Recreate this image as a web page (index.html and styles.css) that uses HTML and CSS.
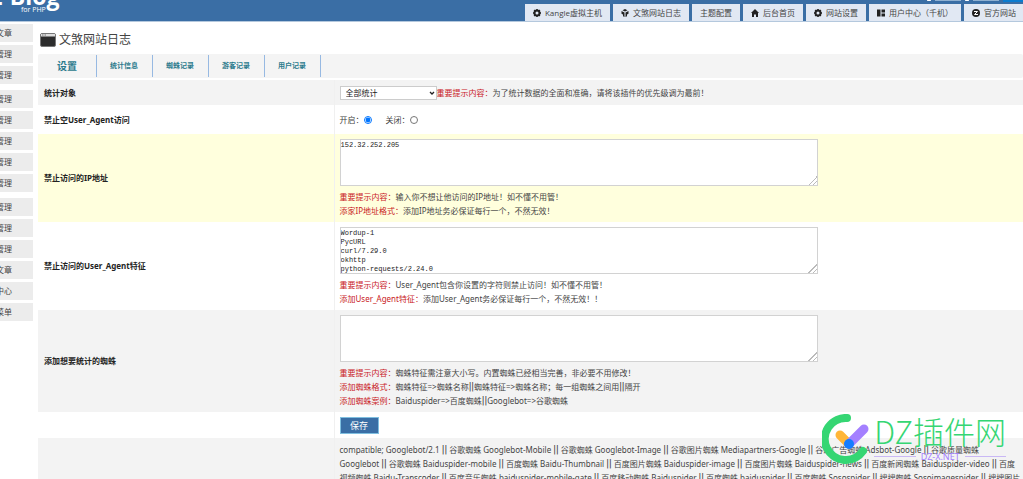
FILE: index.html
```html
<!DOCTYPE html>
<html lang="zh-CN">
<head>
<meta charset="utf-8">
<title>文煞网站日志</title>
<link rel="stylesheet" href="styles.css">
</head>
<body>
<header class="header">
  <div class="logo"><span class="logo-name">Z-Blog</span><span class="logo-sub">for PHP</span></div>
  <div class="account"><i></i><b></b><i></i><b></b><span></span></div>
  <nav class="topnav">
    <a href="#"><svg class="ico" viewBox="0 0 16 16"><circle cx="8" cy="8" r="5" fill="none" stroke="#222" stroke-width="4"/><path d="M8 0v3M8 13v3M0 8h3M13 8h3M2.3 2.3l2 2M11.7 11.7l2 2M2.3 13.7l2-2M11.7 4.3l2-2" stroke="#222" stroke-width="3"/></svg>Kangle虚拟主机</a>
    <a href="#"><svg class="ico" viewBox="0 0 16 16"><path d="M8 0l5 2.500-5 2.500-5-2.500zM1 4l6 3v9l-3-1.500V11L1 9.500zM15 4L9 7v9l3-1.500V11l3-1.500z" fill="#222"/></svg>文煞网站日志</a>
    <a href="#">主题配置</a>
    <a href="#"><svg class="ico" viewBox="0 0 16 16"><path d="M8 0l8 8h-2v8h-4v-5H6v5H2V8H0z" fill="#222"/></svg>后台首页</a>
    <a href="#"><svg class="ico" viewBox="0 0 16 16"><circle cx="8" cy="8" r="5" fill="none" stroke="#222" stroke-width="4"/><path d="M8 0v3M8 13v3M0 8h3M13 8h3M2.3 2.3l2 2M11.7 11.7l2 2M2.3 13.7l2-2M11.7 4.3l2-2" stroke="#222" stroke-width="3"/></svg>网站设置</a>
    <a href="#"><svg class="ico" viewBox="0 0 16 16"><path d="M0 1h7v14H0zM9 1h7v6H9zM9 9h7v6H9z" fill="#222"/></svg>用户中心（千机）</a>
    <a href="#"><svg class="ico" viewBox="0 0 16 16"><circle cx="8" cy="8" r="8" fill="#222"/><path d="M4 5h7l-6 6h7" fill="none" stroke="#fff" stroke-width="2"/></svg>官方网站</a>
  </nav>
</header>
<div class="layout">
  <aside class="sidebar">
    <div class="group"><a href="#">文章</a><a href="#">管理</a><a href="#">管理</a></div>
    <div class="group"><a href="#">管理</a><a href="#">管理</a><a href="#">管理</a><a href="#">管理</a><a href="#">管理</a></div>
    <div class="group"><a href="#">管理</a><a href="#">管理</a><a href="#">管理</a><a href="#">文章</a><a href="#">中心</a><a href="#">菜单</a></div>
  </aside>
  <main class="main">
    <h1 class="title"><svg viewBox="0 0 32 28"><rect x="1" y="1" width="30" height="26" rx="3" fill="#2c2c2c" stroke="#777" stroke-width="2"/><path d="M2 2h28v5H2z" fill="#ddd"/><path d="M4 4h3M9 4h3" stroke="#777" stroke-width="2"/></svg>文煞网站日志</h1>
    <nav class="tabs"><a class="active" href="#">设置</a><a href="#">统计信息</a><a href="#">蜘蛛记录</a><a href="#">游客记录</a><a href="#">用户记录</a></nav>
    <form>
    <table class="settings">
      <tr class="alt"><th><label for="target">统计对象</label></th><td><div class="line"><span class="picker"><select id="target"><option>全部统计</option></select><svg viewBox="0 0 6 4"><path d="M1 1l2 2 2-2" fill="none" stroke="#222" stroke-width="1.300"/></svg></span><span><em>重要提示内容：</em>为了统计数据的全面和准确，请将该插件的优先级调为最前！</span></div></td></tr>
      <tr class="radios"><th>禁止空User_Agent访问</th><td><div class="line"><label>开启：<input type="radio" name="ua" checked></label><label>关闭：<input type="radio" name="ua"></label></div></td></tr>
      <tr class="hover"><th><label for="ip">禁止访问的IP地址</label></th><td><textarea id="ip">152.32.252.205</textarea><p><em>重要提示内容：</em>输入你不想让他访问的IP地址！如不懂不用管！</p><p><em>添家IP地址格式：</em>添加IP地址务必保证每行一个，不然无效！</p></td></tr>
      <tr><th><label for="agent">禁止访问的User_Agent特征</label></th><td><textarea id="agent">Wordup-1
PycURL
curl/7.29.0
okhttp
python-requests/2.24.0</textarea><p><em>重要提示内容：</em>User_Agent包含你设置的字符则禁止访问！如不懂不用管！</p><p><em>添加User_Agent特征：</em>添加User_Agent务必保证每行一个，不然无效！！</p></td></tr>
      <tr class="alt"><th><label for="spider">添加想要统计的蜘蛛</label></th><td><textarea id="spider"></textarea><p><em>重要提示内容：</em>蜘蛛特征需注意大小写。内置蜘蛛已经相当完善，非必要不用修改！</p><p><em>添加蜘蛛格式：</em>蜘蛛特征=&gt;蜘蛛名称<s>||</s>蜘蛛特征=&gt;蜘蛛名称；每一组蜘蛛之间用<s>||</s>隔开</p><p><em>添加蜘蛛案例：</em>Baiduspider=&gt;百度蜘蛛<s>||</s>Googlebot=&gt;谷歌蜘蛛</p></td></tr>
      <tr><th></th><td><button class="save" type="submit">保存</button></td></tr>
      <tr class="alt"><th></th><td><p>compatible; Googlebot/2.1 <s>||</s> 谷歌蜘蛛 Googlebot-Mobile <s>||</s> 谷歌蜘蛛 Googlebot-Image <s>||</s> 谷歌图片蜘蛛 Mediapartners-Google <s>||</s> 谷歌广告蜘蛛 Adsbot-Google <s>||</s> 谷歌质量蜘蛛<br>Googlebot <s>||</s> 谷歌蜘蛛 Baiduspider-mobile <s>||</s> 百度蜘蛛 Baidu-Thumbnail <s>||</s> 百度图片蜘蛛 Baiduspider-image <s>||</s> 百度图片蜘蛛 Baiduspider-news <s>||</s> 百度新闻蜘蛛 Baiduspider-video <s>||</s> 百度<br>视频蜘蛛 Baidu-Transcoder <s>||</s> 百度音乐蜘蛛 baiduspider-mobile-gate <s>||</s> 百度移动蜘蛛 Baiduspider <s>||</s> 百度蜘蛛 baiduspider <s>||</s> 百度蜘蛛 Sosospider <s>||</s> 搜搜蜘蛛 Sosoimagespider <s>||</s> 搜搜图片</p></td></tr>
    </table>
    </form>
  </main>
</div>
<div class="watermark">
  <svg viewBox="0 0 48 50"><path d="M25 4A21 21 0 1 0 41 37" fill="none" stroke="#35d673" stroke-width="8" stroke-linecap="round"/><path d="M18 21l9 9" stroke="#ffb638" stroke-width="9" stroke-linecap="round"/><path d="M27 30l15-15" stroke="#a480ff" stroke-width="9" stroke-linecap="round"/><circle cx="27" cy="30" r="5" fill="#167dff"/></svg>
  <div class="wm-text"><strong>DZ插件网</strong><small>DZ-X.NET</small></div>
</div>
</body>
</html>
```
FILE: styles.css
```css
* { box-sizing: border-box; }
body {
  margin: 0;
  height: 100vh;
  overflow: hidden;
  position: relative;
  background: #fff;
  color: #444;
  font: 8px/14px "Noto Sans", "Noto Sans CJK SC", sans-serif;
}
a { color: inherit; text-decoration: none; }
p { margin: 0; white-space: nowrap; }
em { color: #c9211e; font-style: normal; }
s { font: 11px/1px Roboto, sans-serif; text-decoration: none; }
.header {
  position: relative;
  height: 22px;
  display: flex;
  align-items: flex-end;
  background: #3a6ea5;
  border-bottom: 1px solid #b4c8dd;
  overflow: hidden;
}
.logo { position: absolute; left: -11px; top: -18px; color: #fff; font-family: "Open Sans", sans-serif; }
.logo-name { font-size: 23px; font-weight: 700; line-height: 28px; }
.logo-sub { position: absolute; left: 32px; top: 23px; font-size: 7px; line-height: 9px; white-space: nowrap; }
.account { position: absolute; right: 0; top: 0; display: flex; gap: 4px; height: 2px; }
.account i { width: 4px; height: 1px; background: #fff; border-radius: 1px; }
.account b { width: 26px; height: 1px; background: #8fb0d0; }
.account span { width: 20px; background: #0b7cd0; }
.topnav { display: flex; gap: 3px; margin-left: auto; font-family: "Open Sans", "Noto Sans CJK SC", sans-serif; }
.topnav a {
  display: flex;
  align-items: center;
  gap: 4px;
  height: 17px;
  padding: 0 8px;
  background: #e1e8f3;
  white-space: nowrap;
}
.topnav a:last-child { padding-right: 7px; }
.ico { width: 8px; height: 8px; }
.layout { display: flex; gap: 5px; }
.sidebar { width: 33px; flex: none; padding-top: 2px; }
.group { display: grid; gap: 3px; margin-bottom: 6px; }
.sidebar a {
  display: flex;
  justify-content: flex-end;
  align-items: center;
  height: 18px;
  padding-right: 21px;
  background: #ececec;
  overflow: hidden;
  white-space: nowrap;
}
.main { flex: 1; min-width: 0; }
.title {
  display: flex;
  align-items: center;
  gap: 3px;
  margin: 8px 0 4px 2px;
  font-size: 12px;
  line-height: 20px;
  font-weight: 400;
}
.title svg { width: 16px; height: 14px; }
.tabs { display: flex; height: 24px; padding: 1px 0; margin-bottom: 2px; background: #f4f4f4; border-radius: 2px; }
.tabs a {
  display: flex;
  align-items: center;
  padding: 0 14px 0 13px;
  color: #2b7a8c;
  border-right: 1px solid #97b9e2;
  font-size: 7px;
  font-weight: 700;
}
.tabs .active { padding: 0 19px; font-size: 10px; }
.settings { width: 100%; border-collapse: collapse; table-layout: fixed; }
.settings th { width: 296px; padding: 0 6px; text-align: left; color: #222; font-weight: 700; border-right: 1px solid #f0f0f0; }
.settings td { padding: 5px 5px 4px; }
.settings .alt { background: #f3f3f3; }
.settings .hover { background: #ffd; }
.line { display: flex; align-items: center; height: 16px; white-space: nowrap; }
.radios .line { height: 20px; gap: 14px; }
.radios label { display: flex; align-items: center; }
.radios input { width: 8px; height: 8px; margin: 0; }
.picker { position: relative; display: flex; }
.picker svg { position: absolute; right: 2px; top: 5px; width: 6px; height: 4px; pointer-events: none; }
select {
  appearance: none;
  width: 97px;
  height: 14px;
  padding: 0 5px;
  color: #222;
  background: #fff;
  border: 1px solid #ccc;
  border-radius: 0;
  font: 8px/12px "Noto Sans", "Noto Sans CJK SC", sans-serif;
}
textarea {
  display: block;
  width: 478px;
  max-width: 100%;
  height: 47px;
  margin-bottom: 4px;
  padding: 1px 0;
  border: 1px solid #d2d2d2;
  border-radius: 0;
  background: #fff;
  color: #222;
  font: 7px/9px "Liberation Mono", monospace;
  overflow: hidden;
}
textarea::-webkit-resizer {
  background: linear-gradient(135deg, transparent 70%, #bbb 70% 74%, transparent 74% 84%, #bbb 84% 88%, transparent 88%);
}
.save {
  display: block;
  width: 39px;
  height: 17px;
  padding: 0;
  border: 1px solid #7fbfe0;
  background: #3a6ea5;
  color: #fff;
  font: 9px/14px "Noto Sans", "Noto Sans CJK SC", sans-serif;
}
.watermark { position: absolute; right: 17px; bottom: 15px; display: flex; gap: 4px; }
.watermark svg { width: 48px; height: 50px; }
.wm-text { color: #35d673; }
.wm-text strong {
  display: block;
  font: 300 31px/33px "Noto Sans CJK SC", sans-serif;
}
.wm-text small {
  display: flex;
  align-items: center;
  gap: 5px;
  margin-top: 5px;
  color: #a480ff;
  font-size: 9px;
  line-height: 9px;
}
.wm-text small::before, .wm-text small::after { content: ""; flex: 1; height: 1px; background: #c9b8f5; }
```
